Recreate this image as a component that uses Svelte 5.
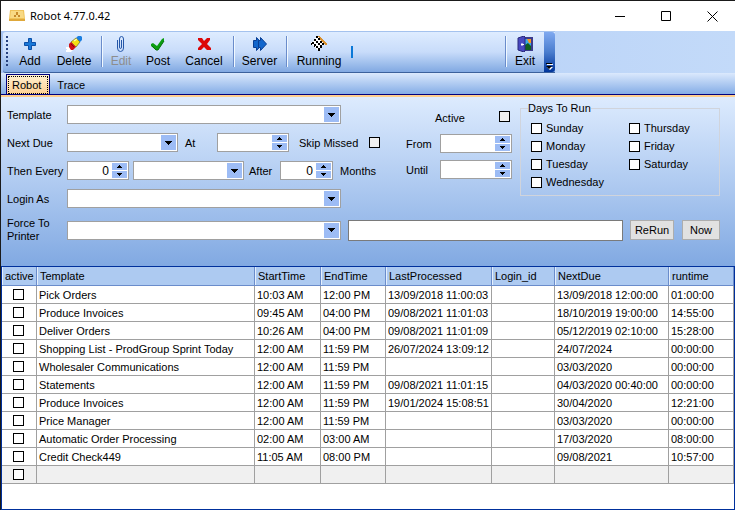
<script lang="ts">
  type Job = { template: string; start: string; end: string; last: string; login: string; next: string; runtime: string };

  const job = (template: string, start: string, end: string, last: string, next: string, runtime: string): Job =>
    ({ template, start, end, last, login: '', next, runtime });

  const jobs: Job[] = [
    job('Pick Orders', '10:03 AM', '12:00 PM', '13/09/2018 11:00:03', '13/09/2018 12:00:00', '01:00:00'),
    job('Produce Invoices', '09:45 AM', '04:00 PM', '09/08/2021 11:01:03', '18/10/2019 19:00:00', '14:55:00'),
    job('Deliver Orders', '10:26 AM', '04:00 PM', '09/08/2021 11:01:09', '05/12/2019 02:10:00', '15:28:00'),
    job('Shopping List - ProdGroup Sprint Today', '12:00 AM', '11:59 PM', '26/07/2024 13:09:12', '24/07/2024', '00:00:00'),
    job('Wholesaler Communications', '12:00 AM', '11:59 PM', '', '03/03/2020', '00:00:00'),
    job('Statements', '12:00 AM', '11:59 PM', '09/08/2021 11:01:15', '04/03/2020 00:40:00', '00:00:00'),
    job('Produce Invoices', '12:00 AM', '11:59 PM', '19/01/2024 15:08:51', '30/04/2020', '12:21:00'),
    job('Price Manager', '12:00 AM', '11:59 PM', '', '03/03/2020', '00:00:00'),
    job('Automatic Order Processing', '02:00 AM', '03:00 AM', '', '17/03/2020', '08:00:00'),
    job('Credit Check449', '11:05 AM', '08:00 PM', '', '09/08/2021', '10:57:00'),
    job('', '', '', '', '', '')
  ];

  const columns = ['active', 'Template', 'StartTime', 'EndTime', 'LastProcessed', 'Login_id', 'NextDue', 'runtime'];
  const days = ['Sunday', 'Monday', 'Tuesday', 'Wednesday', 'Thursday', 'Friday', 'Saturday'];

  let tab = $state('Robot');
  let every = $state('0');
  let after = $state('0');

  const step = (v: string, d: number) => String(Math.max(0, Number(v) + d));
</script>

{#snippet combo(id: string, size: string, label: string)}
  <span class="combo {size}">
    <select {id} aria-label={label}><option></option></select>
    <span class="drop"><svg width="7" height="4" viewBox="0 0 7 4"><path d="M0 0h7v1H6v1H5v1H4v1H3V3H2V2H1V1H0z" /></svg></span>
  </span>
{/snippet}

{#snippet arrows(up: () => void, down: () => void)}
  <span class="arrows">
    <button type="button" aria-label="Increase" onclick={up}><svg width="5" height="3" viewBox="0 0 5 3"><path d="M2 0h1v1h1v1h1v1H0V2h1V1h1z" /></svg></button>
    <button type="button" aria-label="Decrease" onclick={down}><svg width="5" height="3" viewBox="0 0 5 3"><path d="M0 0h5v1H4v1H3v1H2V2H1V1H0z" /></svg></button>
  </span>
{/snippet}

<div class="window">
  <header class="titlebar">
    <svg width="16" height="12" viewBox="0 0 16 12">
      <path d="M1 0h14l1 9v2H0V9z" fill="#efc25a" />
      <path d="M2 1h12l1 7H1z" fill="#f8d984" />
      <path d="M0 9h16v2H0z" fill="#dfa83a" />
      <path d="M7 2h2v2H7zM5 5h2v2H5zM9 5h2v2H9zM7 4h2v1H7z" fill="#c78a2c" />
    </svg>
    <h1>Robot 4.77.0.42</h1>
    <div class="controls">
      <button aria-label="Minimize"><svg width="11" height="11" viewBox="0 0 11 11"><path d="M0 5h10v1H0z" /></svg></button>
      <button aria-label="Maximize"><svg width="11" height="11" viewBox="0 0 11 11"><path d="M.5.5h9v9h-9z" fill="none" stroke="#000" /></svg></button>
      <button aria-label="Close"><svg width="11" height="11" viewBox="0 0 11 11"><path d="M.5.5l10 10M10.500 .5l-10 10" fill="none" stroke="#000" /></svg></button>
    </div>
  </header>

  <div class="toolrow">
    <div class="toolbar" role="toolbar" aria-label="Main">
      <span class="grip"></span>
      <button class="w44">
        <svg width="16" height="16" viewBox="0 0 16 16"><path d="M6.500 2.500h3v4h4v3h-4v4h-3v-4h-4v-3h4z" fill="#1878d8" stroke="#0a4fa8" /></svg>
        Add
      </button>
      <button class="w44">
        <svg width="16" height="16" viewBox="0 0 16 16">
          <path d="M0 11h4l3 3-2 2H0v-2h1v-1H0z" fill="#fff" />
          <path d="M12 0h3l1 1v3l-2 2-4-4z" fill="#1b7fe0" />
          <path d="M10 2l4 4-4 5-5-5z" fill="#f4e012" stroke="#6c6a20" stroke-width=".7" />
          <path d="M8 5l3-2" stroke="#fffbb0" stroke-width="1.500" />
          <path d="M5 6l5 5-3 3H5l-2-3V8z" fill="#cf1016" />
          <path d="M5 8l3 3" stroke="#8a0508" />
        </svg>
        Delete
      </button>
      <span class="sep"></span>
      <button class="w30" disabled>
        <svg width="16" height="16" viewBox="0 0 16 16"><path d="M4.500 4v8q0 3.500 3 3.500t3-3.500V3q0-2.500-2-2.500T6.500 3v8q0 1.500 1 1.500t1-1.500V4" fill="none" stroke="#2456a8" /></svg>
        Edit
      </button>
      <button class="w44">
        <svg width="16" height="16" viewBox="0 0 16 16"><path d="M1 8l2-1 4 3 5-7 2-1v3L8 14H6L1 10z" fill="#0b9d12" /><path d="M2 10l4 4h2l6-9" fill="none" stroke="#067008" /></svg>
        Post
      </button>
      <button class="w48">
        <svg width="16" height="16" viewBox="0 0 16 16"><path d="M2 2h4l2 3 3-3h3v2l-3 4 4 4v2h-4l-3-3-3 3H2v-2l4-4-4-4z" fill="#dc0808" /></svg>
        Cancel
      </button>
      <span class="sep"></span>
      <button class="w43">
        <svg width="16" height="16" viewBox="0 0 16 16"><path d="M1.500 4.500h3v-3l6 6.500-6 6.500v-3h-3z" fill="#1266cc" stroke="#083e94" /><path d="M6.500 4.500h2v-3l6 6.500-6 6.500v-3h-2z" fill="#1266cc" stroke="#083e94" /></svg>
        Server
      </button>
      <span class="sep"></span>
      <button class="w56">
        <svg width="16" height="16" viewBox="0 0 16 16" shape-rendering="crispEdges">
          <path d="M5 1h3l5 6-2 3-3 4H6L0 8V6l3-1z" fill="#fff" />
          <path d="M5 0h2v2H5zM3 3h2v2H3zM7 2h2v2H7zM5 5h2v2H5zM9 5h2v2H9zM1 6h2v2H1zM3 8h2v2H3zM7 7h2v2H7zM11 7h2v2h-2zM5 10h2v2H5zM9 9h2v3H9zM0 7h1v2H0zM7 12h2v3H7zM3 10h1v1H3z" />
          <path d="M7 0h2v1h1v1h1v1h1v1h1v1h1v1h1v1h1v2h-2V8h-1V7h-1V6h-1V5h-1V4h-1V3H9V2H8V1H7z" fill="#d99232" />
        </svg>
        Running
      </button>
      <span class="mark"></span>
      <span class="sep push"></span>
      <button class="w36">
        <svg width="16" height="16" viewBox="0 0 16 16">
          <path d="M6 1h10v14H6z" fill="#3c3c8c" />
          <path d="M8 3h6v11H8z" fill="#38a8e8" /><path d="M10 3h4v4h-2z" fill="#f89820" /><path d="M8 9l3-2 3 3v4H8z" fill="#106020" />
          <path d="M1 2l6-2 1 1v14l-1 1-6-2z" fill="#4848c0" stroke="#28287c" />
          <path d="M5 7v3M4 8.500h3" stroke="#fff" />
        </svg>
        Exit
      </button>
      <button class="more" aria-label="Toolbar options"><svg width="7" height="7" viewBox="0 0 7 7"><path d="M1 1h6v1H1zM1 4h6L4 7z" fill="#fff" /><path d="M0 0h6v1H0zM0 3h6L3 6z" /></svg></button>
    </div>
  </div>

  <div class="tabs" role="tablist">
    {#each ['Robot', 'Trace'] as name}
      <button role="tab" class:on={tab === name} aria-selected={tab === name} onclick={() => (tab = name)}><span>{name}</span></button>
    {/each}
  </div>

  <form onsubmit={(e) => e.preventDefault()}>
    <div class="upper">
      <div class="schedule">
        <div class="row">
          <label class="lead" for="template">Template</label>
          {@render combo('template', 'wide', 'Template')}
        </div>
        <div class="row">
          <label class="lead" for="due">Next Due</label>
          {@render combo('due', 'mid', 'Next Due')}
          <label class="at" for="at">At</label>
          <span class="spin time"><input id="at" />{@render arrows(() => {}, () => {})}</span>
          <label class="skip">Skip Missed <input class="grey" type="checkbox" /></label>
        </div>
        <div class="row">
          <label class="lead" for="every">Then Every</label>
          <span class="spin count"><input id="every" bind:value={every} />{@render arrows(() => (every = step(every, 1)), () => (every = step(every, -1)))}</span>
          <span class="unit">{@render combo('unit', 'mid', 'Interval unit')}</span>
          <label class="after" for="after">After</label>
          <span class="spin months"><input id="after" bind:value={after} />{@render arrows(() => (after = step(after, 1)), () => (after = step(after, -1)))}</span>
          <span class="suffix">Months</span>
        </div>
        <div class="row">
          <label class="lead" for="login">Login As</label>
          {@render combo('login', 'wide', 'Login As')}
        </div>
      </div>

      <div class="period">
        <label class="active">Active <input class="grey" type="checkbox" /></label>
        <div class="row"><label for="from">From</label><span class="spin time"><input id="from" />{@render arrows(() => {}, () => {})}</span></div>
        <div class="row"><label for="until">Until</label><span class="spin time"><input id="until" />{@render arrows(() => {}, () => {})}</span></div>
      </div>

      <fieldset>
        <legend>Days To Run</legend>
        <div class="days">
          {#each days as day}
            <label><input type="checkbox" />{day}</label>
          {/each}
        </div>
      </fieldset>
    </div>

    <div class="row printer">
      <label class="lead" for="printer">Force To Printer</label>
      {@render combo('printer', 'wide', 'Force To Printer')}
      <input class="path" aria-label="Printer path" />
      <button class="cmd">ReRun</button>
      <button class="cmd now">Now</button>
    </div>
  </form>

  <div class="grid">
    <table>
      <colgroup>
        {#each columns as c}<col class="c-{c}" />{/each}
      </colgroup>
      <thead>
        <tr>{#each columns as c}<th scope="col">{c}</th>{/each}</tr>
      </thead>
      <tbody>
        {#each jobs as j}
          <tr class:blank={!j.template}>
            <td class="tick"><input type="checkbox" aria-label="active {j.template}" /></td>
            <td>{j.template}</td>
            <td>{j.start}</td>
            <td>{j.end}</td>
            <td><div class="clip">{j.last}</div></td>
            <td>{j.login}</td>
            <td>{j.next}</td>
            <td>{j.runtime}</td>
          </tr>
        {/each}
      </tbody>
    </table>
  </div>
</div>

<style>
  :global(body) { margin: 0; background: #fff; }
  .window {
    box-sizing: border-box; min-height: 100vh;
    display: flex; flex-direction: column;
    border-top: 1px solid #1a1a1a; border-left: 1px solid #1a1a1a;
    background: #fff; color: #000;
    font: 11px/14px "Liberation Sans", Arial, sans-serif;
  }
  button, input, select { font: inherit; color: inherit; margin: 0; padding: 0; box-sizing: border-box; border-radius: 0; }
  svg { display: block; flex: none; }

  .titlebar { display: flex; align-items: center; height: 30px; padding-left: 8px; }
  h1 { margin: 0 0 0 5px; font: 11px/16px "Noto Sans", sans-serif; }
  .controls { display: flex; margin-left: auto; }
  .controls button { width: 46px; height: 28px; display: grid; place-items: center; border: 0; background: none; }

  .toolrow { display: flex; background: linear-gradient(90deg, #a9c6f4, #c3daf9); }
  .toolbar {
    display: flex; width: 552px; height: 42px; margin-left: 2px; box-sizing: border-box;
    border-top: 1px solid #a4c2ee; border-bottom: 1px solid #3b619c; border-radius: 3px 0 0 3px;
    background: linear-gradient(#deecff, #c8dcfa 50%, #81a9e2);
  }
  .toolbar button {
    display: flex; flex-direction: column; align-items: center; gap: 1px; flex: none;
    padding-top: 4px; border: 0; background: none; font-size: 12px; line-height: 16px;
  }
  .toolbar button:disabled { color: #8d8d8d; }
  .w30 { width: 30px; }
  .w36 { width: 36px; }
  .w43 { width: 43px; }
  .w44 { width: 44px; }
  .w48 { width: 48px; }
  .w56 { width: 56px; }
  .grip { width: 2px; margin: 4px 0 4px 3px; background: repeating-linear-gradient(#27417f 0 2px, transparent 2px 4px); }
  .sep { flex: none; width: 1px; margin: 4px 3px 5px 5px; background: #6a8ccb; border-right: 1px solid #f1f9ff; }
  .push { margin-left: auto; margin-right: 0; }
  .mark { width: 2px; height: 12px; margin: 14px 0 0 4px; background: #0a78d7; }
  .toolbar .more {
    width: 11px; margin-left: 1px; padding: 0 0 2px; justify-content: flex-end;
    border-radius: 0 3px 3px 0; background: linear-gradient(#7fa9f0, #4a7dce 50%, #00359b);
  }

  .tabs {
    display: flex; align-items: flex-end; height: 21px; padding-left: 5px;
    background: linear-gradient(#dbe9fd, #85ade6); border-bottom: 1px solid #00007f;
  }
  .tabs button { height: 20px; padding: 1px 4px 0 7px; border: 0; background: none; line-height: 16px; }
  .tabs .on { padding: 1px 1px 0; border: 1px solid #00007f; border-bottom: 0; background: linear-gradient(#fff0d0, #ffd193); }
  .tabs .on span { display: block; padding: 0 6px 0 3px; border: 1px dotted #000; }

  form { border-top: 2px solid #ffcf8e; padding: 8px 15px 23px 6px; background: linear-gradient(#ddebfe, #b0cbf1 50%, #81a9e2); border-bottom: 1px solid #00309c; }
  .upper { display: flex; align-items: flex-start; }
  .schedule { display: flex; flex-direction: column; gap: 9px; flex: 1 0 378px; }
  .row { display: flex; align-items: center; height: 19px; }
  .lead { flex: none; width: 60px; }
  .combo { display: flex; flex: none; box-sizing: border-box; height: 19px; border: 1px solid #a0a0a0; background: #fff; }
  .wide { width: 274px; }
  .mid { width: 111px; }
  .combo select { flex: 1; min-width: 0; border: 0; background: none; appearance: none; }
  .drop { display: grid; place-items: center; width: 15px; margin: 1px; background: #9dbcf5; pointer-events: none; }
  .spin { display: flex; flex: none; box-sizing: border-box; height: 19px; border: 1px solid #a0a0a0; background: #fff; }
  .spin input { flex: 1; min-width: 0; border: 0; background: none; text-align: right; padding-right: 2px; }
  .time { width: 72px; }
  .count { width: 62px; }
  .months { width: 53px; }
  .count input, .months input { font-size: 12px; }
  .arrows { display: flex; flex-direction: column; gap: 1px; width: 15px; margin: 1px; }
  .arrows button { flex: 1; display: grid; place-items: center; border: 0; background: #9dbcf5; }
  .at { width: 32px; margin-left: 7px; }
  .skip { display: flex; align-items: center; gap: 11px; margin-left: 10px; white-space: nowrap; }
  .unit { display: flex; margin-left: 4px; }
  .after { width: 31px; margin-left: 5px; }
  .suffix { margin-left: 7px; }

  input[type='checkbox'] { appearance: none; flex: none; width: 11px; height: 11px; border: 1px solid #000; background: #fff; }
  input[type='checkbox'].grey { background: #f0f0f0; }
  input[type='checkbox']:checked { box-shadow: inset 0 0 0 2px #fff; background: #000; }

  .period { flex: none; display: flex; flex-direction: column; gap: 7px; width: 108px; margin-left: 21px; padding-top: 6px; }
  .period .row label { width: 34px; }
  .active { display: flex; justify-content: space-between; height: 16px; align-items: flex-start; padding: 0 4px 0 29px; }

  fieldset { flex: none; width: 200px; min-width: 0; margin: -4px 0 0 6px; padding: 4px 10px; box-sizing: border-box; border: 1px solid #d0d4dc; }
  legend { padding: 0; margin-left: -3px; }
  .days { display: grid; grid-template: repeat(4, 18px) / 98px auto; grid-auto-flow: column; }
  .days label { display: flex; align-items: center; gap: 4px; }

  .printer { margin-top: 9px; height: 26px; }
  .printer .lead { line-height: 13px; padding-right: 12px; box-sizing: border-box; }
  .path { flex: 1; min-width: 0; height: 21px; margin: 0 7px; border: 1px solid #7a7a7a; background: #fff; }
  .cmd { width: 44px; height: 20px; border: 1px solid #adadad; background: #e1e1e1; }
  .now { width: 38px; margin-left: 8px; }

  .grid { flex: 1; border: solid #00309c; border-width: 0 1px 1px; }
  table { width: 100%; table-layout: fixed; border-collapse: separate; border-spacing: 0; }
  th, td { height: 18px; box-sizing: border-box; padding: 0 2px; text-align: left; white-space: nowrap; overflow: hidden; border-right: 1px solid #a0a0a0; border-bottom: 1px solid #a0a0a0; }
  th { height: 19px; padding: 0 3px; font-weight: 400; background: #adcaf1; border-color: #6a8ccb; box-shadow: inset 1px 0 #e4effd; }
  .clip { overflow: hidden; }
  .tick { padding: 0 0 0 11px; }
  .tick input { display: block; }
  .blank td { background: #f0f0f0; }
  .c-active { width: 35px; }
  .c-StartTime { width: 66px; }
  .c-EndTime { width: 65px; }
  .c-LastProcessed { width: 106px; }
  .c-Login_id { width: 63px; }
  .c-NextDue { width: 114px; }
  .c-runtime { width: 65px; }
</style>
